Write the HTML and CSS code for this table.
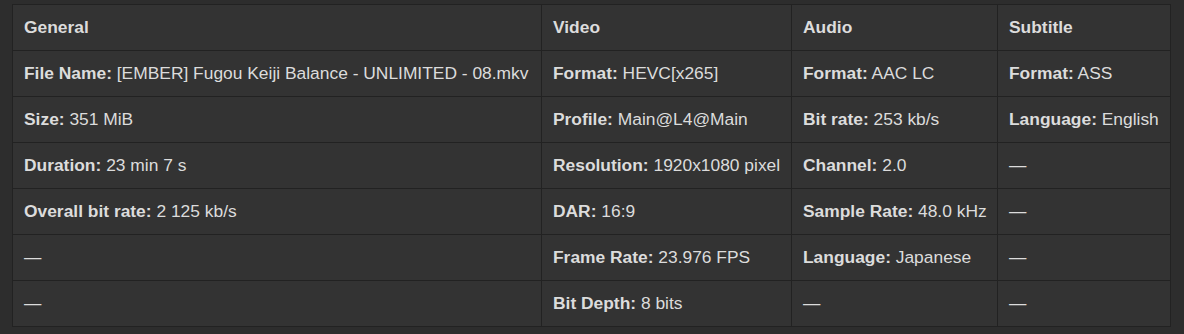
FILE: index.html
```html
<!DOCTYPE html>
<html>
<head>
<meta charset="utf-8">
<link rel="stylesheet" href="styles.css">
</head>
<body>
<table class="info">
  <colgroup>
    <col class="c1"><col class="c2"><col class="c3"><col class="c4">
  </colgroup>
  <thead>
    <tr><th>General</th><th>Video</th><th>Audio</th><th>Subtitle</th></tr>
  </thead>
  <tbody>
    <tr>
      <td><b>File Name:</b> [EMBER] Fugou Keiji Balance - UNLIMITED - 08.mkv</td>
      <td><b>Format:</b> HEVC[x265]</td>
      <td><b>Format:</b> AAC LC</td>
      <td><b>Format:</b> ASS</td>
    </tr>
    <tr>
      <td><b>Size:</b> 351 MiB</td>
      <td><b>Profile:</b> Main@L4@Main</td>
      <td><b>Bit rate:</b> 253 kb/s</td>
      <td><b>Language:</b> English</td>
    </tr>
    <tr>
      <td><b>Duration:</b> 23 min 7 s</td>
      <td><b>Resolution:</b> 1920x1080 pixel</td>
      <td><b>Channel:</b> 2.0</td>
      <td>—</td>
    </tr>
    <tr>
      <td><b>Overall bit rate:</b> 2 125 kb/s</td>
      <td><b>DAR:</b> 16:9</td>
      <td><b>Sample Rate:</b> 48.0 kHz</td>
      <td>—</td>
    </tr>
    <tr>
      <td>—</td>
      <td><b>Frame Rate:</b> 23.976 FPS</td>
      <td><b>Language:</b> Japanese</td>
      <td>—</td>
    </tr>
    <tr>
      <td>—</td>
      <td><b>Bit Depth:</b> 8 bits</td>
      <td>—</td>
      <td>—</td>
    </tr>
  </tbody>
</table>
</body>
</html>
```
FILE: styles.css
```css
html, body {
  margin: 0;
  padding: 0;
  background: #2d2d2d;
}
body {
  padding: 4px 0 0 12px;
  font-family: "Liberation Sans", Arial, sans-serif;
  font-size: 17.4px;
  color: #dcdcdc;
}
.info {
  border-collapse: collapse;
  table-layout: fixed;
  width: 1158px;
  background: #333333;
}
.c1 { width: 529px; }
.c2 { width: 250px; }
.c3 { width: 206px; }
.c4 { width: 173px; }
.info th, .info td {
  border: 1px solid #222222;
  height: 46px;
  padding: 0 11px;
  text-align: left;
  vertical-align: middle;
  white-space: nowrap;
  box-sizing: border-box;
}
.info th {
  font-weight: bold;
}
.info b {
  font-weight: bold;
}
```
